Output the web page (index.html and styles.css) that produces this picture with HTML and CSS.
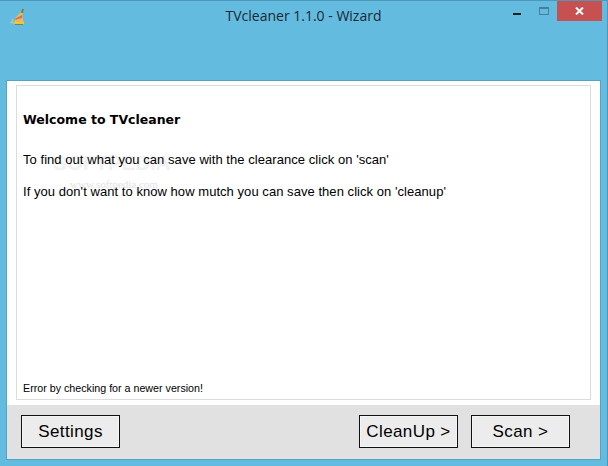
FILE: index.html
```html
<!DOCTYPE html>
<html lang="en">
<head>
<meta charset="utf-8">
<title>TVcleaner 1.1.0 - Wizard</title>
<link rel="stylesheet" href="styles.css">
</head>
<body>
<div class="window">
  <header class="titlebar">
    <svg class="app-icon" width="16" height="18" viewBox="0 0 16 18">
      <path d="M0 16 L3 11 L4 17 Z" fill="#d8cf8a" opacity=".6"/>
      <path d="M4 16 L6 10 L10 6 L14 2 L12 9 L14 16 Z" fill="#e9b95a"/>
      <path d="M6 11 L12 8 L12 11 L5 13 Z" fill="#e0705a"/>
      <path d="M4 15 H14 V17 H4 Z" fill="#f0c832"/>
      <path d="M5 17 H13 V18 H5 Z" fill="#7a6a30" opacity=".7"/>
      <path d="M12 2 L14 2 L13 6 L11 6 Z" fill="#8a7a30"/>
    </svg>
    <div class="title">TVcleaner 1.1.0 - Wizard</div>
    <div class="controls">
      <div class="ctl ctl-min"><span class="min-glyph"></span></div>
      <div class="ctl ctl-max"><span class="max-glyph"></span></div>
      <div class="ctl-close">
        <svg width="9" height="8" viewBox="0 0 9 8"><path d="M1 .5 L8 7.5 M8 .5 L1 7.5" stroke="#fff" stroke-width="2" fill="none"/></svg>
      </div>
    </div>
  </header>
  <main class="panel">
    <section class="content">
      <div class="watermark">
        <div class="wm-big">SOFTPEDIA<sup class="wm-tm">™</sup></div>
        <div class="wm-small">www.softpedia.com</div>
      </div>
      <h1 class="heading">Welcome to TVcleaner</h1>
      <p class="line line-first">To find out what you can save with the clearance click on 'scan'</p>
      <p class="line line-second">If you don't want to know how mutch you can save then click on 'cleanup'</p>
      <p class="status">Error by checking for a newer version!</p>
    </section>
    <footer class="actions">
      <button class="btn">Settings</button>
      <div class="actions-right">
        <button class="btn">CleanUp &gt;</button>
        <button class="btn">Scan &gt;</button>
      </div>
    </footer>
  </main>
</div>
</body>
</html>
```
FILE: styles.css
```css
html, body {
  margin: 0;
  padding: 0;
  height: 100%;
  overflow: hidden;
}
body {
  background: #63bbe0;
  font-family: "Liberation Sans", Arial, sans-serif;
  color: #000;
}
.window {
  width: 608px;
  height: 466px;
  box-sizing: border-box;
  border-top: 1px solid #4f97b8;
  border-right: 1px solid #4f97b8;
  padding: 0 6px 6px 6px;
  display: flex;
  flex-direction: column;
}
.titlebar {
  height: 79px;
  position: relative;
  display: flex;
  justify-content: center;
}
.app-icon {
  position: absolute;
  left: 4px;
  top: 6px;
}
.title {
  font-family: "Open Sans", sans-serif;
  font-size: 14px;
  line-height: 18px;
  margin-top: 6px;
  color: #1a2a33;
}
.controls {
  position: absolute;
  right: -1px;
  top: 0;
  display: flex;
  align-items: flex-start;
}
.ctl {
  width: 26px;
  height: 20px;
  position: relative;
}
.min-glyph {
  position: absolute;
  left: 0;
  top: 12px;
  width: 8px;
  height: 2px;
  background: #1f1f1f;
}
.max-glyph {
  position: absolute;
  left: 0;
  top: 6px;
  width: 8px;
  height: 5px;
  border: 1px solid #4b7f99;
  border-top-width: 2px;
}
.ctl-max { width: 18px; }
.ctl-close {
  width: 45px;
  height: 20px;
  background: #c75050;
  display: flex;
  align-items: center;
  justify-content: center;
}
.panel {
  flex: 1;
  display: flex;
  flex-direction: column;
  border: 1px solid #52a3c4;
  background: #fff;
  min-height: 0;
}
.content {
  flex: 1;
  position: relative;
  margin: 4px 9px 5px 9px;
  border: 1px solid #dcdcdc;
  padding: 0 6px;
  display: flex;
  flex-direction: column;
  min-height: 0;
}
.heading, .line, .status {
  position: relative;
  z-index: 1;
}
.heading {
  font-family: "DejaVu Sans", sans-serif;
  font-size: 12.5px;
  font-weight: bold;
  line-height: 16px;
  margin: 26px 0 0;
}
.line {
  font-size: 13px;
  letter-spacing: .05px;
  line-height: 16px;
  margin: 0;
}
.line-first { margin-top: 24px; }
.line-second { margin-top: 16px; }
.status {
  font-size: 10.7px;
  line-height: 14px;
  margin: auto 0 4px;
}
.watermark {
  position: absolute;
  left: 36px;
  top: 64px;
  width: 122px;
  color: #f1f1f1;
  text-align: center;
  white-space: nowrap;
}
.wm-big {
  font-size: 21px;
  font-weight: bold;
  line-height: 20px;
  letter-spacing: -.3px;
}
.wm-tm { font-size: 7px; }
.wm-small {
  font-family: "Liberation Serif", serif;
  font-size: 11px;
  line-height: 12px;
  margin-top: 5px;
  color: #e2e2e2;
}
.actions {
  height: 54px;
  box-sizing: border-box;
  background: #e1e1e1;
  display: flex;
  justify-content: space-between;
  padding: 10px 30px 0 14px;
}
.actions-right {
  display: flex;
  gap: 13px;
}
.btn {
  width: 99px;
  height: 33px;
  padding: 0;
  box-sizing: border-box;
  border: 1px solid #111;
  box-shadow: inset 0 0 0 1px #f5f5f5;
  background: #ececec;
  font-family: "Liberation Sans", Arial, sans-serif;
  font-size: 17px;
  letter-spacing: .4px;
  color: #000;
}
```
